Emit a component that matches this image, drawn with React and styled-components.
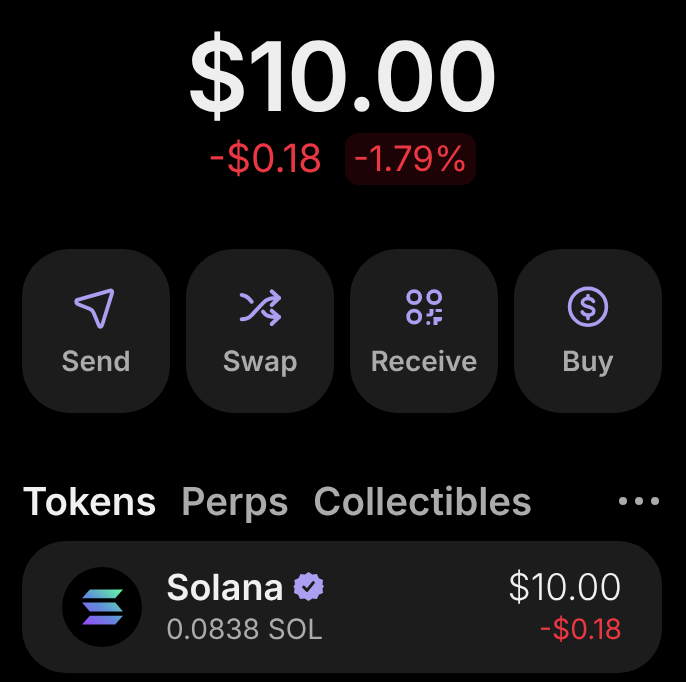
import React from "react";
import styled, { createGlobalStyle } from "styled-components";

const Global = createGlobalStyle`
  html, body { margin: 0; padding: 0; background: #000; overflow: hidden; }
  body { font-family: Inter, "Liberation Sans", sans-serif; text-rendering: geometricPrecision; -webkit-font-smoothing: antialiased; }
`;
const Page = styled.div`
  width: 686px; height: 682px; overflow: hidden; will-change: transform;
  display: flex; flex-direction: column; padding: 0 24px 0 22px; box-sizing: border-box;
`;
const Hero = styled.div`
  display: flex; flex-direction: column; align-items: center; padding-top: 19px;
`;
const Total = styled.div`
  font-size: 96px; line-height: 116px; font-weight: 600; color: #eeeeee; letter-spacing: -1px;
`;
const ChangeRow = styled.div`
  display: flex; align-items: center; gap: 23px; margin-top: -2px; height: 52px;
`;
const ChangeText = styled.span`
  font-size: 39px; line-height: 44px; color: #eb3742; font-weight: 380;
`;
const Badge = styled.span`
  font-size: 35px; line-height: 44px; color: #eb3742; background: #1e0306; font-weight: 380;
  border-radius: 14px; padding: 4px 7.5px; height: 44px;
`;
const Actions = styled.div`
  display: grid; grid-template-columns: repeat(4, 148px); gap: 16px; margin-top: 64px;
`;
const Action = styled.div`
  height: 164px; background: #1c1c1c; border-radius: 48px;
  display: flex; flex-direction: column; align-items: center; padding-top: 37px; box-sizing: border-box;
`;
const IconSlot = styled.div`
  width: 44px; height: 44px; display: flex; align-items: center; justify-content: center;
`;
const ActionLabel = styled.span`
  margin-top: 13px; font-size: 28px; line-height: 36px; font-weight: 600; color: #ababab;
`;
const Tabs = styled.div`
  display: flex; align-items: center; gap: 24px; margin-top: 65px; height: 48px;
`;
const Tab = styled.span`
  font-size: 38.6px; line-height: 48px; font-weight: 600;
  color: ${(p) => (p.$active ? "#f0f0f0" : "#ababab")};
`;
const More = styled.div`
  margin-left: auto; margin-right: 3px; margin-top: -2px; display: flex; gap: 8px;
`;
const Dot = styled.span`
  width: 8px; height: 8px; border-radius: 50%; background: #ababab;
`;
const Card = styled.div`
  margin-top: 15px; height: 132px; width: 640px; background: #1c1c1c; border-radius: 44px;
  display: flex; align-items: center; padding: 0 40px 0 40px; box-sizing: border-box;
`;
const TokenIcon = styled.div`
  width: 80px; height: 80px; border-radius: 50%; background: #000;
  display: flex; align-items: center; justify-content: center; flex: none;
`;
const TokenInfo = styled.div`
  margin-left: 24px; display: flex; flex-direction: column;
`;
const NameRow = styled.div`
  display: flex; align-items: center; gap: 9px;
`;
const TokenName = styled.span`
  font-size: 36px; line-height: 44px; font-weight: 600; color: #f0f0f0; margin-top: -3px;
`;
const TokenSub = styled.span`
  font-size: 28px; line-height: 36px; color: #ababab; font-weight: 400; margin-top: 2px;
`;
const Values = styled.div`
  margin-left: auto; display: flex; flex-direction: column; align-items: flex-end;
`;
const Value = styled.span`
  font-size: 36.8px; line-height: 44px; color: #f0f0f0; font-weight: 350; margin-top: -3px;
`;
const ValueChange = styled.span`
  font-size: 28.3px; line-height: 36px; color: #eb3742; font-weight: 380; margin-top: 2px;
`;

const P = "#ab9ff2";

const SendIcon = () => (
  <svg width="44" height="44" viewBox="0 0 44 44" fill="none" stroke={P} strokeWidth="3.8" strokeLinejoin="round">
    <path d="M3.5 13.8L36 4.6c1.500-.4 2.600.6 2.200 2L28 39.500c-.5 1.500-2.300 1.700-3 .3L19.500 26.500c-.8-1.800-1.800-2.800-3.500-3.500L3.500 18c-1.700-.8-1.700-3.700 0-4.200z" />
  </svg>
);
const SwapIcon = () => (
  <svg width="44" height="44" viewBox="0 0 44 44" fill="none" stroke={P} strokeWidth="4" strokeLinecap="round" strokeLinejoin="round">
    <path d="M3.700 9c4 .3 7 2.700 10 6.700" />
    <path d="M3.700 33.300c4 0 6.800-.6 9.800-4L25 17c4-4.500 8-5 16-5" />
    <path d="M33.700 5.300L41 12l-7.300 7" />
    <path d="M25 25.700c2.500 3.800 5 5.300 16 5.300" />
    <path d="M33.700 24.700L41 31l-7.300 7" />
  </svg>
);
const ReceiveIcon = () => (
  <svg width="44" height="44" viewBox="0 0 44 44" fill="none">
    <g stroke={P} strokeWidth="3.800">
      <circle cx="12.200" cy="11.200" r="6" />
      <circle cx="32.200" cy="11.200" r="6" />
      <circle cx="12.200" cy="30.700" r="6" />
    </g>
    <g fill={P}>
      <path d="M24.500 27.500h3v-4.500h4v4c0 2-1 3.500-3.500 3.500h-3.500z" />
      <rect x="33.500" y="23" width="6.500" height="3" rx="1" />
      <path d="M31.500 31H40v2c0 1.500-1 2.500-2.500 2.500h-2V39h-4z" />
      <circle cx="26.300" cy="37" r="2" />
    </g>
  </svg>
);
const BuyIcon = () => (
  <svg width="44" height="44" viewBox="0 0 44 44" fill="none" stroke={P} strokeWidth="3.600" strokeLinecap="round">
    <circle cx="22" cy="20.800" r="18.400" />
    <path d="M27.500 15.500c-.8-1.800-2.800-3-5.500-3-3.300 0-5.600 1.600-5.600 4.100 0 5.600 11.400 2.800 11.400 8.400 0 2.500-2.400 4.100-5.800 4.100-2.800 0-5-1.200-5.800-3.200" />
    <path d="M22 9.500v3M22 29.600v3" />
  </svg>
);
const VerifiedIcon = () => (
  <svg width="31" height="31" viewBox="0 0 32 32" style={{ marginTop: -3 }}>
    <path fill={P} d="M16 1l4 2.600 4.700-.6 2 4.400 4.300 2-.6 4.600 1.600 2-1.600 2 .6 4.600-4.300 2-2 4.300-4.700-.6-4 2.700-4-2.700-4.700.6-2-4.300-4.300-2 .6-4.600L.4 16 2 14l-.6-4.600 4.300-2 2-4.400 4.700.6z" />
    <path fill="none" stroke="#1c1c1c" strokeWidth="3" strokeLinecap="round" strokeLinejoin="round" d="M11 16.500l3.500 3.500 6.500-8" />
  </svg>
);
const SolanaIcon = () => (
  <svg width="41" height="36" viewBox="0 0 42 36">
    <defs>
      <linearGradient id="sol" x1="2" y1="38" x2="36" y2="-4" gradientUnits="userSpaceOnUse">
        <stop offset="0" stopColor="#9945ff" />
        <stop offset="0.5" stopColor="#5f90d8" />
        <stop offset="1" stopColor="#62f8a0" />
      </linearGradient>
    </defs>
    <path fill="url(#sol)" d="M8 0h34l-8 9H0z" />
    <path fill="url(#sol)" d="M0 13.500h34l8 9H8z" />
    <path fill="url(#sol)" d="M8 27h34l-8 9H0z" />
  </svg>
);

const actions = [
  ["Send", SendIcon],
  ["Swap", SwapIcon],
  ["Receive", ReceiveIcon],
  ["Buy", BuyIcon],
];

export default function App() {
  return (
    <Page>
      <Global />
      <Hero>
        <Total>$10.00</Total>
        <ChangeRow>
          <ChangeText>-$0.18</ChangeText>
          <Badge>-1.79%</Badge>
        </ChangeRow>
      </Hero>
      <Actions>
        {actions.map(([label, Icon]) => (
          <Action key={label}>
            <IconSlot><Icon /></IconSlot>
            <ActionLabel>{label}</ActionLabel>
          </Action>
        ))}
      </Actions>
      <Tabs>
        <Tab $active>Tokens</Tab>
        <Tab>Perps</Tab>
        <Tab>Collectibles</Tab>
        <More><Dot /><Dot /><Dot /></More>
      </Tabs>
      <Card>
        <TokenIcon><SolanaIcon /></TokenIcon>
        <TokenInfo>
          <NameRow>
            <TokenName>Solana</TokenName>
            <VerifiedIcon />
          </NameRow>
          <TokenSub>0.0838 SOL</TokenSub>
        </TokenInfo>
        <Values>
          <Value>$10.00</Value>
          <ValueChange>-$0.18</ValueChange>
        </Values>
      </Card>
    </Page>
  );
}
